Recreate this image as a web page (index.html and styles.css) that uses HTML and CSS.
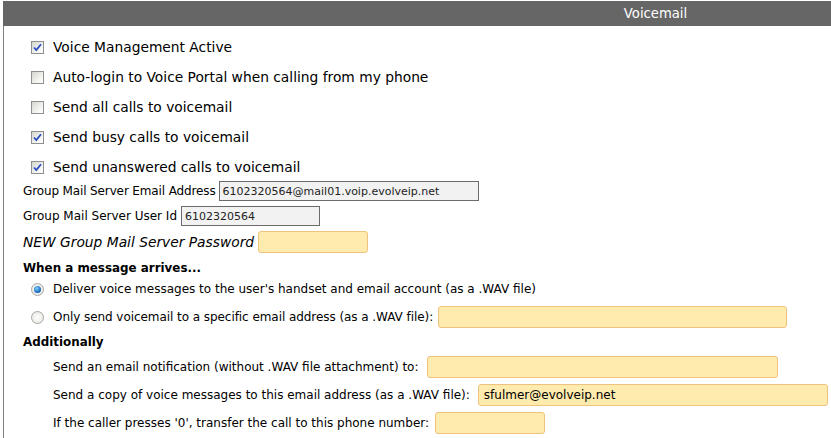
FILE: index.html
```html
<!DOCTYPE html>
<html>
<head>
<meta charset="utf-8">
<link rel="stylesheet" href="styles.css">
</head>
<body>
<div class="panel">
  <div class="header"><span></span><span class="title">Voicemail</span></div>
  <div class="content">
    <div class="checks">
      <label class="crow"><span class="cb on"><svg viewBox="0 0 11 11" width="11" height="11"><path d="M2 5.5 L4.3 8 L9 2.2" fill="none" stroke="#2a4fc0" stroke-width="1.8"/></svg></span>Voice Management Active</label>
      <label class="crow"><span class="cb"></span>Auto-login to Voice Portal when calling from my phone</label>
      <label class="crow"><span class="cb"></span>Send all calls to voicemail</label>
      <label class="crow"><span class="cb on"><svg viewBox="0 0 11 11" width="11" height="11"><path d="M2 5.5 L4.3 8 L9 2.2" fill="none" stroke="#2a4fc0" stroke-width="1.8"/></svg></span>Send busy calls to voicemail</label>
      <label class="crow"><span class="cb on"><svg viewBox="0 0 11 11" width="11" height="11"><path d="M2 5.5 L4.3 8 L9 2.2" fill="none" stroke="#2a4fc0" stroke-width="1.8"/></svg></span>Send unanswered calls to voicemail</label>
    </div>
    <div class="frow r-email"><span class="lbl tight">Group Mail Server Email Address</span><span class="ro w-email">6102320564@mail01.voip.evolveip.net</span></div>
    <div class="frow r-uid"><span class="lbl">Group Mail Server User Id</span><span class="ro w-uid">6102320564</span></div>
    <div class="frow r-pw"><span class="lbl italic">NEW Group Mail Server Password</span><span class="yin w-pw"></span></div>
    <div class="heading h-when">When a message arrives...</div>
    <div class="frow ind r-rad1"><span class="rd on"></span><span class="lbl">Deliver voice messages to the user's handset and email account (as a .WAV file)</span></div>
    <div class="frow ind r-rad2"><span class="rd"></span><span class="lbl tight2">Only send voicemail to a specific email address (as a .WAV file):</span><span class="yin w-only"></span></div>
    <div class="heading h-add">Additionally</div>
    <div class="frow ind2 r-notif"><span class="lbl">Send an email notification (without .WAV file attachment) to:</span><span class="yin w-notif"></span></div>
    <div class="frow ind2 r-copy"><span class="lbl">Send a copy of voice messages to this email address (as a .WAV file):</span><span class="yin w-copy">sfulmer@evolveip.net</span></div>
    <div class="frow ind2 r-zero"><span class="lbl">If the caller presses '0', transfer the call to this phone number:</span><span class="yin w-zero"></span></div>
  </div>
</div>
</body>
</html>
```
FILE: styles.css
```css
* { box-sizing: border-box; }
html, body { margin: 0; padding: 0; background: #fff; }
body { font-family: "DejaVu Sans", Verdana, sans-serif; color: #000; width: 831px; height: 438px; overflow: hidden; }
.panel { margin: 1px 0 0 3px; }
.header { height: 25px; background: #666666; display: grid; grid-template-columns: 477px 1fr; align-items: center; }
.header .title { color: #fff; font-size: 13.2px; text-align: center; }
.content { border-left: 1px solid #808080; padding-left: 19px; height: 420px; }
.checks { display: flex; flex-direction: column; gap: 6px; padding-top: 9px; }
.crow { display: flex; align-items: center; height: 24px; font-size: 13.8px; padding-left: 8px; }
.cb { width: 13px; height: 13px; border: 1px solid #8f8f8f; background: linear-gradient(135deg, #d6d6d0, #f6f6f4 70%, #fff); margin-right: 9px; display: inline-flex; align-items: center; justify-content: center; flex: none; }
.frow { display: flex; align-items: center; font-size: 12px; }
.lbl { white-space: nowrap; }
.tight { letter-spacing: -0.13px; }
.tight2 { letter-spacing: -0.06px; }
.italic { font-style: italic; font-size: 13.8px; }
.ro { height: 100%; border: 1px solid #6b6b6b; background: #f2f2f2; font-size: 11px; padding: 0 3px; display: flex; align-items: center; margin-left: 4px; color: #222; }
.yin { height: 100%; border: 1px solid #efc27e; background: #ffebad; border-radius: 3px; margin-left: 4px; display: flex; align-items: center; font-size: 12px; padding: 0 5px; }
.r-email { height: 20px; margin-top: 2px; }
.w-email { width: 260px; margin-left: 3px; }
.r-uid { height: 20px; margin-top: 5px; }
.w-uid { width: 139px; }
.r-pw { height: 22px; margin-top: 5px; }
.w-pw { width: 110px; }
.heading { font-weight: bold; font-size: 11.9px; height: 16px; display: flex; align-items: center; }
.h-when { margin-top: 7px; }
.ind { padding-left: 8px; }
.rd { width: 13px; height: 13px; border-radius: 50%; border: 1px solid #a6a6a6; background: radial-gradient(circle at 50% 50%, #fff, #e2e2dc); margin-right: 9px; flex: none; position: relative; }
.rd.on::after { content: ""; position: absolute; left: 2px; top: 2px; width: 7px; height: 7px; border-radius: 50%; background: radial-gradient(circle at 40% 35%, #7fd0ff, #1060b8 70%, #0a3a7a); }
.r-rad1 { height: 18px; margin-top: 4px; }
.r-rad2 { height: 22px; margin-top: 8px; }
.w-only { width: 349px; margin-left: 5px; }
.h-add { margin-top: 6px; }
.ind2 { padding-left: 30px; }
.r-notif { height: 22px; margin-top: 6px; }
.w-notif { width: 351px; margin-left: 8px; }
.r-copy { height: 22px; margin-top: 6px; }
.w-copy { width: 350px; margin-left: 8px; }
.r-zero { height: 22px; margin-top: 6px; }
.w-zero { width: 110px; margin-left: 6px; }
```
